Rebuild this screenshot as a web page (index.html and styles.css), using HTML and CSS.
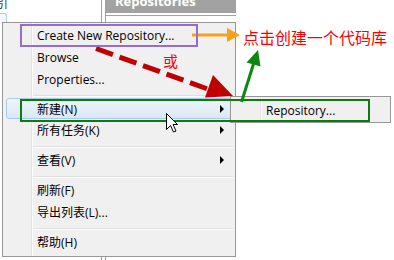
FILE: index.html
```html
<!DOCTYPE html>
<html>
<head>
<meta charset="utf-8">
<link rel="stylesheet" href="styles.css">
</head>
<body>
<div class="screen">
  <div class="desk">
    <div class="pane-left">
      <div class="glyph"><span>引</span></div>
      <div class="tree-sel"></div>
    </div>
    <div class="pane-gap"></div>
    <div class="pane-right">
      <div class="hdr"><span>Repositories</span></div>
      <div class="hdr-rule"></div>
    </div>
  </div>

  <div class="menu">
    <div class="item">Create New Repository...</div>
    <div class="item">Browse</div>
    <div class="item">Properties...</div>
    <div class="sep"></div>
    <div class="item hot">新建(N)<i class="arr"></i></div>
    <div class="item">所有任务(K)<i class="arr"></i></div>
    <div class="sep"></div>
    <div class="item">查看(V)<i class="arr"></i></div>
    <div class="sep"></div>
    <div class="item">刷新(F)</div>
    <div class="item">导出列表(L)...</div>
    <div class="sep"></div>
    <div class="item">帮助(H)</div>
  </div>

  <div class="submenu">
    <div class="sub-item">Repository...</div>
  </div>

  <span class="note-or">或</span>
  <span class="note-main">点击创建一个代码库</span>

  <svg class="ink" width="394" height="260" viewBox="0 0 394 260">
    <line x1="96" y1="48.5" x2="209" y2="89.5" stroke="#c00000" stroke-width="5" stroke-dasharray="18 7"/>
    <polygon points="213,75 205,97.5 233,96" fill="#c00000"/>
    <line x1="192" y1="35" x2="229" y2="35" stroke="#f7a11a" stroke-width="3"/>
    <polygon points="227,28 227,42 240,35" fill="#f7a11a"/>
    <rect x="21" y="25" width="176" height="21" fill="none" stroke="#9a6bcf" stroke-width="2"/>
    <rect x="21" y="100" width="348" height="21" fill="none" stroke="#0c7c0c" stroke-width="2"/>
    <line x1="241.5" y1="102" x2="253.5" y2="64" stroke="#0e870e" stroke-width="3"/>
    <polygon points="258,50 246.5,62.5 260.5,66.5" fill="#0e870e"/>
    <path transform="translate(166.5 113.5)" d="M0 0 V16 L4 12 L7 18.5 L9.5 17.5 L6.5 11 H11 Z" fill="#fff" stroke="#000" stroke-width="1"/>
  </svg>
</div>
</body>
</html>
```

FILE: styles.css
```css
body {
  margin: 0;
}

.screen {
  position: relative;
  width: 394px;
  height: 260px;
  overflow: hidden;
  background: #fff;
  font-family: "Open Sans", "Noto Sans CJK SC", sans-serif;
  color: #000;
}

.desk {
  display: flex;
  height: 260px;
}

.pane-left {
  width: 101px;
  border-right: 1px solid #a0a0a0;
}

.glyph {
  width: 9px;
  height: 9px;
  overflow: hidden;
}

.glyph span {
  display: block;
  margin-left: -4px;
  margin-top: -3px;
  font-size: 12px;
  line-height: 14px;
  color: #333;
}

.tree-sel {
  margin-top: 4px;
  width: 6px;
  height: 10px;
  border: 1px solid #a3d2f0;
  border-left: none;
  border-bottom: none;
  border-top-right-radius: 3px;
  background: #f2f8fd;
}

.pane-gap {
  width: 3px;
}

.pane-right {
  width: 130px;
  border-left: 1px solid #a0a0a0;
}

.hdr {
  height: 13px;
  overflow: hidden;
  background: #a2a2a2;
  padding-left: 9px;
}

.hdr span {
  display: block;
  margin-top: -7px;
  font-size: 13px;
  font-weight: bold;
  line-height: 16px;
  color: #fff;
}

.hdr-rule {
  margin-top: 2px;
  height: 1px;
  background: #a2a2a2;
}

.menu {
  position: absolute;
  left: 2px;
  top: 22px;
  width: 234px;
  height: 235px;
  box-sizing: border-box;
  border: 1px solid #979797;
  padding: 1px 0 2px;
  background:
    linear-gradient(90deg, transparent 28px, #e2e3e3 28px, #e2e3e3 29px, #fff 29px, #fff 30px, transparent 30px),
    #f0f0f0;
  font-size: 12px;
}

.item {
  display: flex;
  align-items: center;
  height: 22px;
  box-sizing: border-box;
  padding-left: 34px;
  white-space: nowrap;
}

.arr {
  margin-left: auto;
  margin-right: 11px;
  width: 0;
  height: 0;
  border-left: 4px solid #000;
  border-top: 4px solid transparent;
  border-bottom: 4px solid transparent;
}

.item.hot {
  height: 21px;
  margin: 1px 3px 0;
  padding-left: 30px;
  border: 1px solid #a9cbe9;
  border-radius: 3px;
  background: linear-gradient(#eef5fb, #dbe8f5);
}

.item.hot .arr {
  margin-right: 7px;
}

.sep {
  height: 0;
  margin: 5px 2px 1px 30px;
  border-top: 1px solid #e0e0e0;
  border-bottom: 1px solid #fff;
}

.submenu {
  position: absolute;
  left: 230px;
  top: 96px;
  width: 161px;
  height: 27px;
  box-sizing: border-box;
  border: 1px solid #979797;
  padding: 2px 0 1px;
  background:
    linear-gradient(90deg, transparent 29px, #e2e3e3 29px, #e2e3e3 30px, #fff 30px, #fff 31px, transparent 31px),
    #f0f0f0;
  font-size: 12px;
}

.sub-item {
  display: flex;
  align-items: center;
  height: 22px;
  padding-left: 35px;
}

.note-or {
  position: absolute;
  left: 163px;
  top: 53px;
  font-size: 15px;
  line-height: 15px;
  color: #f00;
  font-family: "Noto Sans CJK SC", sans-serif;
}

.note-main {
  position: absolute;
  left: 243px;
  top: 29px;
  font-size: 16px;
  line-height: 16px;
  color: #f00;
  font-family: "Noto Sans CJK SC", sans-serif;
  white-space: nowrap;
}

.ink {
  position: absolute;
  left: 0;
  top: 0;
  pointer-events: none;
}
```
